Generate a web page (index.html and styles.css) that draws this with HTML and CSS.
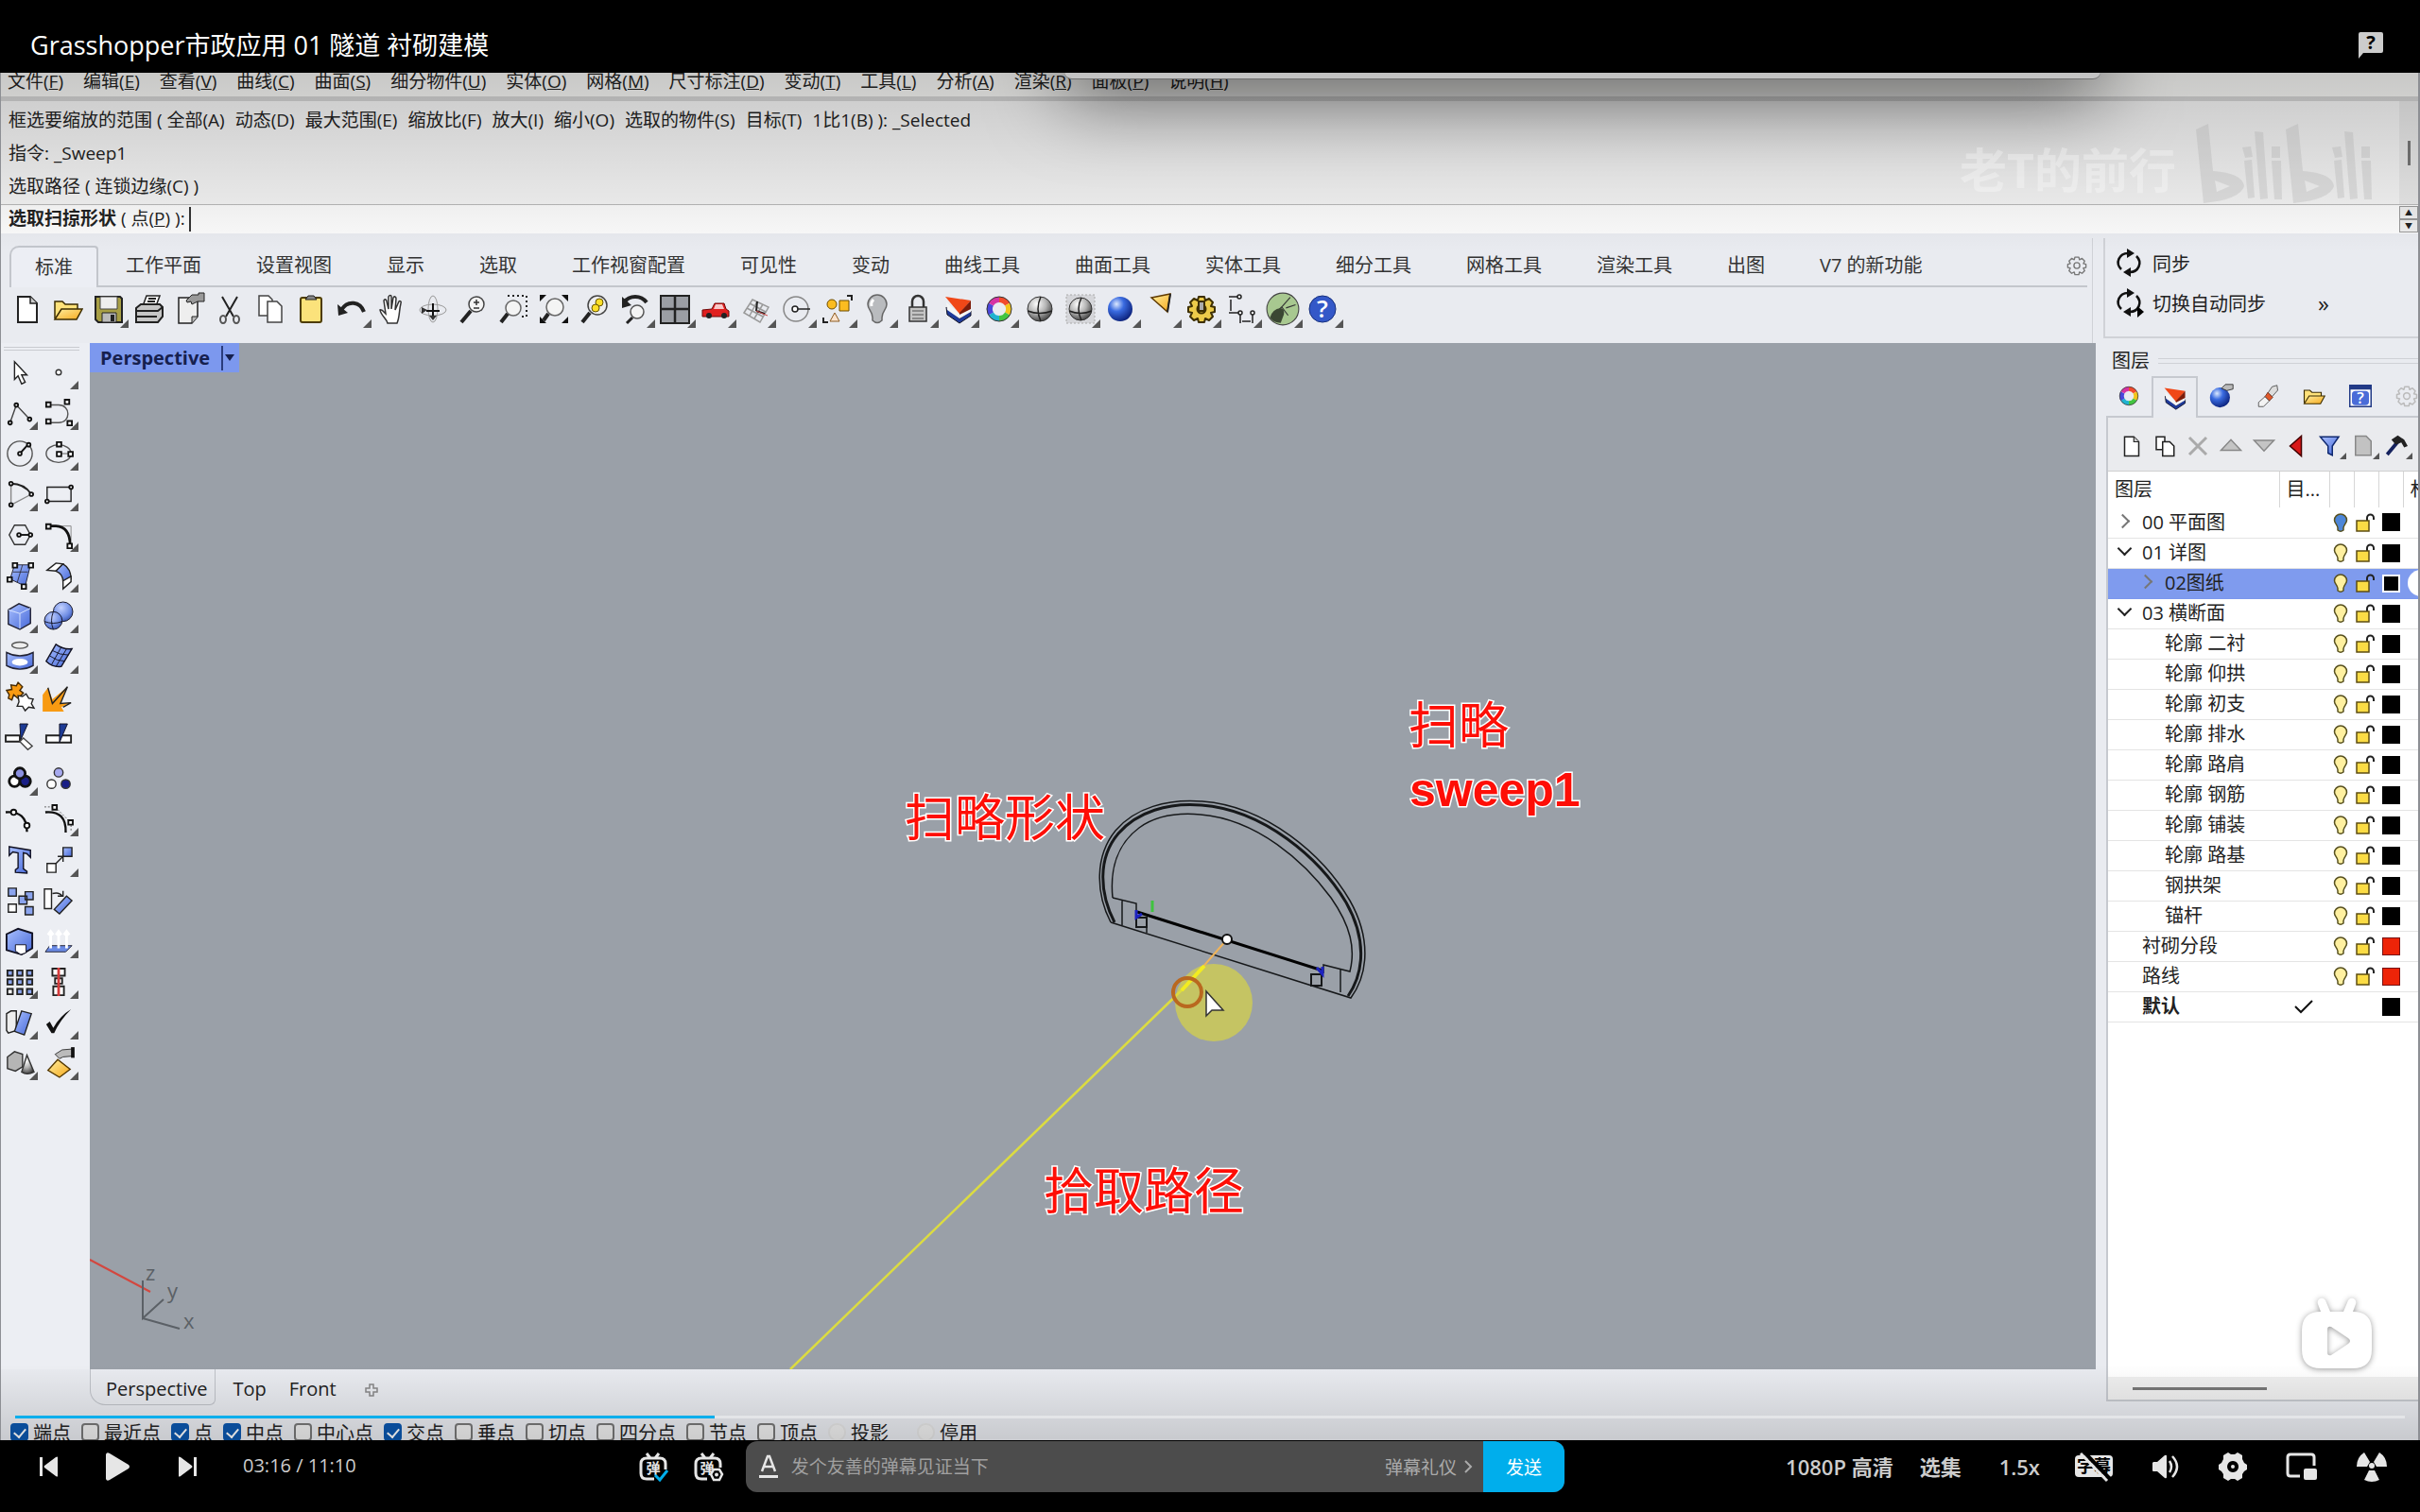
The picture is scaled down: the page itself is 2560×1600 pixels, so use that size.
FILE: index.html
```
<!DOCTYPE html>
<html lang="zh-CN">

<head>
  <meta charset="UTF-8">
  <meta name="viewport" content="width=device-width, initial-scale=1.0">
  <title>Grasshopper市政应用 01 隧道 衬砌建模</title>
  <link rel="stylesheet" href="styles.css">
</head>

<body>
  <!-- 共用圖形 -->
  <svg class="defs" aria-hidden="true">
    <defs>
      <linearGradient id="blue" x2="1" y2="1"><stop stop-color="#a9c0ff"/><stop offset="1" stop-color="#4668d8"/></linearGradient>
      <linearGradient id="gold" x2="1" y2="1"><stop stop-color="#fff0a0"/><stop offset="1" stop-color="#f5a81c"/></linearGradient>
      <radialGradient id="ball" cx=".38" cy=".3" r=".75"><stop stop-color="#fff"/><stop offset=".5" stop-color="#b4b4b4"/><stop offset="1" stop-color="#3c3c3c"/></radialGradient>
      <radialGradient id="blueball" cx=".35" cy=".3" r=".75"><stop stop-color="#dbe8ff"/><stop offset=".4" stop-color="#3a6be0"/><stop offset="1" stop-color="#0a1f78"/></radialGradient>
      <radialGradient id="paleball" cx=".4" cy=".3" r=".8"><stop stop-color="#c4d2ff"/><stop offset=".6" stop-color="#6f8de4"/><stop offset="1" stop-color="#2c469f"/></radialGradient>
    </defs>
    <symbol id="bulb" viewBox="0 0 18 22"><path d="M9 2a6.500 6.500 0 0 0-6.500 6.500c0 3 3 4.500 3.500 8V19q3 2.500 6 0v-2.500c.5-3.500 3.500-5 3.500-8A6.500 6.500 0 0 0 9 2z" stroke="#57501f" stroke-width="1.500"/></symbol>
    <symbol id="lock" viewBox="0 0 22 22"><path d="M13 9V6a3.500 3.500 0 0 1 7 0v2" fill="none" stroke="#222" stroke-width="2"/><rect x="2" y="9" width="13" height="11" fill="#fbdc45" stroke="#5d4d12" stroke-width="1.500"/></symbol>
    <symbol id="layers" viewBox="0 0 32 32"><path d="M3 14l14 12 12-8v5l-12 8L4 22z" fill="#1e3a9a" stroke="#112"/><path d="M3 9l14 12 12-6v4l-12 7L4 17z" fill="#f5f5f5"/><path d="M2 3l27 4-12 14z" fill="#f04818"/><path d="M29 7v9l-12 6v-2z" fill="#7c1c0a"/></symbol>
    <symbol id="wheel" viewBox="0 0 32 32"><g fill="none" stroke-width="6"><path d="M16 6a10 10 0 0 1 8.700 5" stroke="#f24b2c"/><path d="M24.700 11a10 10 0 0 1 0 10" stroke="#f3c51b"/><path d="M24.700 21A10 10 0 0 1 16 26" stroke="#43c541"/><path d="M16 26a10 10 0 0 1-8.700-5" stroke="#20b3d0"/><path d="M7.300 21a10 10 0 0 1 0-10" stroke="#4a46da"/><path d="M7.300 11A10 10 0 0 1 16 6" stroke="#d533a4"/></g><circle cx="16" cy="16" r="13" fill="none" stroke="#333"/></symbol>
    <symbol id="page" viewBox="0 0 32 32"><path d="M6 3h13l7 7v20H6z" fill="#fff" stroke="#222" stroke-width="2"/><path d="M19 3v7h7" fill="#ccc" stroke="#222" stroke-width="1.500"/></symbol>
    <symbol id="folder" viewBox="0 0 32 32"><path d="M2 26V8h8l3 3h13v5" fill="#ffe27a" stroke="#3b2c00" stroke-width="1.500"/><path d="M2 27l7-11h22l-6 11z" fill="url(#gold)" stroke="#3b2c00" stroke-width="1.500"/></symbol>
    <symbol id="sync" viewBox="0 0 32 32"><path d="M8 23C1 16 6 6 15 6M24 9c7 7 2 17-7 17" fill="none" stroke="#111" stroke-width="2.500"/><path d="M14 1l8 5-8 5zM18 21l-8 5 8 5z" fill="#111"/></symbol>
    <symbol id="cog" viewBox="0 0 32 32"><path d="M13 3h6l1 4 4-2 4 4-2 4 4 1v5l-4 1 2 4-4 4-4-2-1 4h-6l-1-4-4 2-4-4 2-4-4-1v-5l4-1-2-4 4-4 4 2z" stroke-linejoin="round"/><circle cx="16" cy="16" r="4.500" /></symbol>
  </svg>

  <header class="topbar">
    <h1>Grasshopper市政应用 01 隧道 衬砌建模</h1>
    <button class="feedback" aria-label="反馈"><svg width="28" height="30" viewBox="0 0 28 30"><path d="M3 1h22q2 0 2 2v18q0 2-2 2H6l-5 6V3q0-2 2-2z" fill="#ccc"/><text x="14" y="19" class="mark">?</text></svg></button>
  </header>

  <main class="video">
    <nav class="menubar">
      <button>文件(<u>F</u>)</button>
      <button>编辑(<u>E</u>)</button>
      <button>查看(<u>V</u>)</button>
      <button>曲线(<u>C</u>)</button>
      <button>曲面(<u>S</u>)</button>
      <button>细分物件(<u>U</u>)</button>
      <button>实体(<u>O</u>)</button>
      <button>网格(<u>M</u>)</button>
      <button>尺寸标注(<u>D</u>)</button>
      <button>变动(<u>T</u>)</button>
      <button>工具(<u>L</u>)</button>
      <button>分析(<u>A</u>)</button>
      <button>渲染(<u>R</u>)</button>
      <button>面板(<u>P</u>)</button>
      <button>说明(<u>H</u>)</button>
    </nav>

    <section class="history">
      <div class="log">
        <p class="options"><span>框选要缩放的范围 ( 全部(A)</span><span>动态(D)</span><span>最大范围(E)</span><span>缩放比(F)</span><span>放大(I)</span><span>缩小(O)</span><span>选取的物件(S)</span><span>目标(T)</span><span>1比1(B) ): _Selected</span></p>
        <p>指令: _Sweep1</p>
        <p>选取路径 ( 连锁边缘(C) )</p>
      </div>
      <div class="log-scroll"><i></i></div>
    </section>
    <div class="command">
      <label for="cmd"><b>选取扫掠形状</b> ( 点(<u>P</u>) ):</label>
      <input id="cmd" type="text">
      <div class="spin"><button aria-label="上一个">▲</button><button aria-label="下一个">▼</button></div>
    </div>

    <div class="workspace">
      <div class="main-col">
        <div class="toolbars">
          <div class="tabs">
            <button class="active">标准</button>
            <button>工作平面</button>
            <button>设置视图</button>
            <button>显示</button>
            <button>选取</button>
            <button>工作视窗配置</button>
            <button>可见性</button>
            <button>变动</button>
            <button>曲线工具</button>
            <button>曲面工具</button>
            <button>实体工具</button>
            <button>细分工具</button>
            <button>网格工具</button>
            <button>渲染工具</button>
            <button>出图</button>
            <button>V7 的新功能</button>
            <button class="tab-cog" aria-label="选项"><svg width="22" height="22" fill="none" stroke="#777" stroke-width="2"><use href="#cog"/></svg></button>
          </div>
          <div class="iconbar">
            <button class="tool" aria-label="新建"><svg viewBox="0 0 32 32"><use href="#page"/></svg></button>
            <button class="tool" aria-label="打开"><svg viewBox="0 0 32 32"><use href="#folder"/></svg></button>
            <button class="tool more" aria-label="保存"><svg viewBox="0 0 32 32"><path d="M2 3h26l2 2v25H5l-3-3z" fill="#a89f45" stroke="#222" stroke-width="2"/><path d="M7 3h18v13H7z" fill="#eee" stroke="#444"/><path d="M9 20h15v10H9z" fill="#bbb" stroke="#222"/><path d="M18 22h4v7h-4z" fill="#222"/></svg></button>
            <button class="tool" aria-label="打印"><svg viewBox="0 0 32 32"><path d="M9 13l4-11h14l-4 11" fill="#fff" stroke="#222" stroke-width="1.500"/><path d="M2 15l5-4h20l3 3v10l-5 6H2z" fill="#c6c6c6" stroke="#222" stroke-width="2"/><path d="M2 18h23l5-4M3 24h21M15 5h8M14 8h8" stroke="#222" stroke-width="2" fill="none"/></svg></button>
            <button class="tool" aria-label="文件属性"><svg viewBox="0 0 32 32"><path d="M4 4h20v20l-6 7H4z" fill="#eee" stroke="#222" stroke-width="1.500"/><path d="M18 31v-7h6" fill="#bbb" stroke="#222"/><path d="M12 7l6-6h7v-2h6v9h-7l-6 3-1-3-4 1z" fill="#999" stroke="#222"/></svg></button>
            <button class="tool" aria-label="剪切"><svg viewBox="0 0 32 32"><path d="M8 3l12 21M24 3L12 24" stroke="#222" stroke-width="2"/><ellipse cx="9" cy="27" rx="3" ry="4" fill="none" stroke="#555" stroke-width="2"/><ellipse cx="23" cy="27" rx="3" ry="4" fill="none" stroke="#555" stroke-width="2"/></svg></button>
            <button class="tool" aria-label="复制"><svg viewBox="0 0 32 32"><path d="M4 2h10l4 4v17H4z" fill="#fff" stroke="#444" stroke-width="1.500"/><path d="M13 8h10l5 5v17H13z" fill="#fff" stroke="#444" stroke-width="1.500"/></svg></button>
            <button class="tool" aria-label="粘贴"><svg viewBox="0 0 32 32"><rect x="5" y="4" width="22" height="26" rx="2" fill="#fbe27b" stroke="#4d3c00" stroke-width="2"/><path d="M10 6l3-4h6l3 4z" fill="#888" stroke="#222"/></svg></button>
            <button class="tool more" aria-label="撤销"><svg viewBox="0 0 32 32"><path d="M5 17C12 6 25 8 29 19" fill="none" stroke="#222" stroke-width="4"/><path d="M1 11l1 12 10-3z" fill="#222"/></svg></button>
            <button class="tool" aria-label="平移"><svg viewBox="0 0 32 32"><path d="M11 31c-1-5-7-8-8-14 2-1 4 2 6 4L7 7c1-2 3-1 3 1l2 8V3c1-2 3-2 3 0v13l2-12c1-2 3-1 3 1l-1 12 4-9c1-1 3 0 2 2-2 8-1 14-4 21z" fill="#fff" stroke="#333" stroke-width="1.500"/></svg></button>
            <button class="tool" aria-label="旋转视图"><svg viewBox="0 0 32 32"><ellipse cx="16" cy="17" rx="14" ry="6" fill="none" stroke="#999"/><ellipse cx="16" cy="16" rx="5" ry="14" fill="none" stroke="#999"/><path d="M16 10v14M9 18h14" stroke="#111" stroke-width="2"/><path d="M4 14l6 3-6 4zM16 28l-4-5h8z" fill="#333"/></svg></button>
            <button class="tool" aria-label="缩放"><svg viewBox="0 0 32 32"><circle cx="20" cy="11" r="8" fill="#f4f4f4" stroke="#444" stroke-width="1.500"/><path d="M14 18L4 30" stroke="#222" stroke-width="4"/><path d="M17 9h6M20 6v6M17 15h6" stroke="#333" stroke-width="1.500"/></svg></button>
            <button class="tool" aria-label="框选缩放"><svg viewBox="0 0 32 32"><path d="M10 2h20v22h-6" fill="none" stroke="#222" stroke-width="2" stroke-dasharray="2 3"/><circle cx="16" cy="15" r="8" fill="#f4f4f4" stroke="#666" stroke-width="1.500"/><path d="M10 21L3 30" stroke="#222" stroke-width="4"/></svg></button>
            <button class="tool" aria-label="缩放至最大范围"><svg viewBox="0 0 32 32"><circle cx="17" cy="14" r="9" fill="#f4f4f4" stroke="#666" stroke-width="1.500"/><path d="M10 21L5 28" stroke="#222" stroke-width="4"/><path d="M1 1h7L1 8zM31 1h-7l7 7zM1 31h7l-7-7zM31 31h-7l7-7z" fill="#111"/></svg></button>
            <button class="tool" aria-label="缩放选取物件"><svg viewBox="0 0 32 32"><circle cx="19" cy="12" r="10" fill="#eee" stroke="#444" stroke-width="1.500"/><path d="M11 20L3 30" stroke="#222" stroke-width="4"/><circle cx="21" cy="9" r="4" fill="#ffdf28" stroke="#665500"/><circle cx="17" cy="15" r="4" fill="#ffdf28" stroke="#665500"/></svg></button>
            <button class="tool more" aria-label="复原视图"><svg viewBox="0 0 32 32"><path d="M4 9C10 1 22 1 28 9" fill="none" stroke="#222" stroke-width="4"/><path d="M2 3v12l10-3z" fill="#222"/><circle cx="18" cy="19" r="7" fill="#f4f4f4" stroke="#555" stroke-width="1.500"/><path d="M13 25l-6 6" stroke="#222" stroke-width="3"/></svg></button>
            <button class="tool more" aria-label="四个视图"><svg viewBox="0 0 32 32"><path d="M1 2h30v29H1z" fill="#9b9ea4" stroke="#222" stroke-width="2"/><path d="M16 2v29M1 16h30" stroke="#222" stroke-width="2.500"/></svg></button>
            <button class="tool more" aria-label="设定视图"><svg viewBox="0 0 32 32"><path d="M2 17l10-1 3-6h10l2 6 3 2v6H2z" fill="#e02020" stroke="#6f0808"/><path d="M16 11h7l2 5H14z" fill="#f8c8c8"/><circle cx="9" cy="23" r="3" fill="#222"/><circle cx="25" cy="23" r="3" fill="#222"/></svg></button>
            <button class="tool more" aria-label="工作平面"><svg viewBox="0 0 32 32"><path d="M3 20L12 6l17 8-9 16zM6 15l17 9M9 10l17 9M9 23l8-15M14 26l9-15" fill="none" stroke="#999" stroke-width="1.500"/><path d="M16 18l1-10M16 18l9 3" stroke="#222" stroke-width="2"/><path d="M16 18l12 5" stroke="#c44"/></svg></button>
            <button class="tool more" aria-label="圆心"><svg viewBox="0 0 32 32"><circle cx="15" cy="16" r="13" fill="none" stroke="#888" stroke-width="1.500"/><path d="M14 16h16" stroke="#222" stroke-width="1.500"/><circle cx="14" cy="16" r="3" fill="#fff" stroke="#222" stroke-width="1.500"/></svg></button>
            <button class="tool more" aria-label="选取"><svg viewBox="0 0 32 32"><circle cx="10" cy="11" r="5" fill="#fbbc20" stroke="#6d4c00"/><path d="M18 7h10v11H18z" fill="#fbbc20" stroke="#6d4c00"/><path d="M13 20l5 9H8z" fill="#fbe2cc" stroke="#8d5c20"/><path d="M26 2h5v5M1 25v5h5" fill="none" stroke="#222" stroke-width="2"/></svg></button>
            <button class="tool more" aria-label="隐藏"><svg viewBox="0 0 32 32"><path d="M16 1a10 10 0 0 0-10 10c0 6 5 7 5 14v3q5 5 10 0v-3c0-7 5-8 5-14A10 10 0 0 0 16 1z" fill="#b9bbbe" stroke="#666" stroke-width="1.500"/><path d="M12 6q-3 3-2 7" fill="none" stroke="#fff" stroke-width="3"/></svg></button>
            <button class="tool more" aria-label="锁定"><svg viewBox="0 0 32 32"><path d="M10 15V8a6 6 0 0 1 12 0v7" fill="none" stroke="#333" stroke-width="2.500"/><path d="M7 14h18v15H7z" fill="#c4c4c4" stroke="#333" stroke-width="1.500"/><path d="M10 18h12M10 22h12M10 26h12" stroke="#777" stroke-width="1.500"/></svg></button>
            <button class="tool more" aria-label="图层"><svg viewBox="0 0 32 32"><use href="#layers"/></svg></button>
            <button class="tool more" aria-label="颜色"><svg viewBox="0 0 32 32"><use href="#wheel"/></svg></button>
            <button class="tool" aria-label="着色"><svg viewBox="0 0 32 32"><circle cx="16" cy="16" r="13" fill="url(#ball)" stroke="#333"/><path d="M3 18q13 5 26 0M17 3q-6 13 0 26" fill="none" stroke="#222" stroke-width="1.500"/></svg></button>
            <button class="tool more" aria-label="着色视图"><svg viewBox="0 0 32 32"><path d="M1 1h30v30H1z" fill="#d5d6da" stroke="#aaa" stroke-dasharray="2 2"/><circle cx="16" cy="16" r="12" fill="url(#ball)" stroke="#333"/><path d="M4 18q12 5 24 0M17 4q-6 12 0 24" fill="none" stroke="#222" stroke-width="1.500"/></svg></button>
            <button class="tool more" aria-label="渲染"><svg viewBox="0 0 32 32"><circle cx="16" cy="16" r="13" fill="url(#blueball)"/></svg></button>
            <button class="tool more" aria-label="聚光灯"><svg viewBox="0 0 32 32"><path d="M6 4l20-4-3 19z" fill="url(#gold)" stroke="#5f3a00" stroke-width="1.500"/><path d="M26 0l-3 19" stroke="#222" stroke-width="2"/></svg></button>
            <button class="tool more" aria-label="选项"><svg viewBox="0 0 32 32" fill="#eccb4a" stroke="#3d2f00" stroke-width="2"><use href="#cog"/><path d="M13 8h6v10h-6z" fill="#aaa"/></svg></button>
            <button class="tool more" aria-label="尺寸"><svg viewBox="0 0 32 32"><path d="M2 3h10M4 6v12M2 20h10M14 21v10M27 21v10M16 29h9" stroke="#222" stroke-width="1.500"/><g fill="#fff" stroke="#222" stroke-width="1.500"><circle cx="13" cy="3" r="2"/><circle cx="14" cy="20" r="2"/><circle cx="27" cy="20" r="2"/></g></svg></button>
            <button class="tool more big" aria-label="Grasshopper"><svg viewBox="0 0 32 32"><circle cx="16" cy="16" r="15" fill="#a8c890" stroke="#444"/><path d="M9 20l6-6 8-9M15 14l6 8M19 15l9-3" fill="none" stroke="#333"/><path d="M4 24q2-8 10-9 4 1 3 6l-3 8Q7 29 4 24z" fill="#3b4733"/></svg></button>
            <button class="tool more" aria-label="说明"><svg viewBox="0 0 32 32"><circle cx="16" cy="16" r="14" fill="#3458c8" stroke="#16307c"/><text x="16" y="25" class="help">?</text></svg></button>
          </div>
        </div>

        <div class="stage">
          <aside class="sidebar">
            <button class="tool" aria-label="取消选取"><svg viewBox="0 0 32 32"><path d="M10 4v20l4-4 4 9 4-2-4-8h6z" fill="#fff" stroke="#222" stroke-width="1.500"/></svg></button>
            <button class="tool more" aria-label="点"><svg viewBox="0 0 32 32"><circle cx="16" cy="16" r="3" fill="#fff" stroke="#333" stroke-width="1.500"/></svg></button>
            <button class="tool more" aria-label="多重直线"><svg viewBox="0 0 32 32"><path d="M5 27L12 7l15 16" fill="none" stroke="#444" stroke-width="1.500"/><g fill="#fff" stroke="#111" stroke-width="2"><circle cx="5" cy="27" r="2"/><circle cx="12" cy="7" r="2"/><circle cx="27" cy="23" r="2"/></g></svg></button>
            <button class="tool more" aria-label="曲线"><svg viewBox="0 0 32 32"><path d="M4 7h12c14 0 14 20 0 20H4" fill="none" stroke="#555" stroke-width="1.500"/><g fill="#fff" stroke="#111" stroke-width="2"><path d="M2 4h5v5H2zM23 1h5v5h-5zM2 23h5v5H2zM26 25h5v5h-5z"/></g></svg></button>
            <button class="tool more" aria-label="圆"><svg viewBox="0 0 32 32"><circle cx="16" cy="16" r="14" fill="none" stroke="#555" stroke-width="1.500"/><path d="M16 16l9-10" stroke="#111" stroke-width="2"/><circle cx="16" cy="16" r="2" fill="#fff" stroke="#111" stroke-width="2"/><circle cx="26" cy="6" r="2" fill="#fff" stroke="#111" stroke-width="2"/></svg></button>
            <button class="tool more" aria-label="椭圆"><svg viewBox="0 0 32 32"><ellipse cx="16" cy="16" rx="14" ry="10" fill="none" stroke="#555" stroke-width="1.500"/><path d="M16 16h12" stroke="#555"/><g fill="#fff" stroke="#111" stroke-width="2"><path d="M14 3h5v5h-5zM14 14h5v5h-5zM27 14h5v5h-5z"/></g></svg></button>
            <button class="tool more" aria-label="圆弧"><svg viewBox="0 0 32 32"><path d="M6 4v24l23-12" fill="none" stroke="#888" stroke-width="1.500"/><path d="M6 4q15 0 23 12" fill="none" stroke="#222" stroke-width="2"/><g fill="#fff" stroke="#111" stroke-width="2"><circle cx="6" cy="4" r="2"/><circle cx="6" cy="28" r="2"/><circle cx="29" cy="16" r="2"/></g></svg></button>
            <button class="tool more" aria-label="矩形"><svg viewBox="0 0 32 32"><path d="M3 8h27v16H3z" fill="none" stroke="#222" stroke-width="1.500"/><circle cx="30" cy="8" r="2" fill="#fff" stroke="#111" stroke-width="2"/><circle cx="3" cy="24" r="2" fill="#fff" stroke="#111" stroke-width="2"/></svg></button>
            <button class="tool more" aria-label="多边形"><svg viewBox="0 0 32 32"><path d="M10 5h12l6 11-6 11H10L4 16z" fill="none" stroke="#333" stroke-width="1.500"/><path d="M15 16h13" stroke="#111" stroke-width="2"/><circle cx="15" cy="16" r="2" fill="#fff" stroke="#111" stroke-width="2"/><circle cx="28" cy="16" r="2" fill="#fff" stroke="#111" stroke-width="2"/></svg></button>
            <button class="tool more" aria-label="曲线圆角"><svg viewBox="0 0 32 32"><path d="M16 6h14v16" fill="none" stroke="#888"/><path d="M5 6h8q16 1 16 22" fill="none" stroke="#111" stroke-width="3"/><g fill="#fff" stroke="#111" stroke-width="2"><path d="M2 4h5v5H2zM26 26h5v5h-5z"/></g></svg></button>
            <button class="tool more" aria-label="曲面"><svg viewBox="0 0 32 32"><path d="M10 4h18l-6 24L5 20z" fill="url(#blue)" stroke="#223"/><path d="M19 4l-6 20M8 12h17" stroke="#334"/><g fill="#fff" stroke="#111" stroke-width="2"><path d="M8 2h5v5H8zM26 2h5v5h-5zM2 18h5v5H2zM18 26h5v5h-5z"/></g></svg></button>
            <button class="tool more" aria-label="曲面圆角"><svg viewBox="0 0 32 32"><path d="M3 10L13 2l8 1-8 8z" fill="#fff" stroke="#222" stroke-width="1.500"/><path d="M21 3q9 5 9 17l-9 3q0-9-8-12z" fill="url(#blue)" stroke="#222" stroke-width="1.500"/><path d="M21 22v9l9-8v-6z" fill="#fff" stroke="#222" stroke-width="1.500"/></svg></button>
            <button class="tool more" aria-label="立方体"><svg viewBox="0 0 32 32"><path d="M3 9l12-7 13 5v17l-12 7L3 25z" fill="url(#blue)" stroke="#223" stroke-width="1.500"/><path d="M3 9l13 4 12-6M16 13v17" fill="none" stroke="#d9e4ff"/></svg></button>
            <button class="tool more" aria-label="布尔运算"><svg viewBox="0 0 32 32"><circle cx="21" cy="11" r="11" fill="url(#paleball)" stroke="#112"/><circle cx="10" cy="21" r="10" fill="url(#paleball)" stroke="#112"/><path d="M0 22q10 4 20 0M10 11q-4 10 0 20" fill="none" stroke="#112"/></svg></button>
            <button class="tool more" aria-label="投影"><svg viewBox="0 0 32 32"><ellipse cx="16" cy="3" rx="9" ry="3.500" fill="#eee" stroke="#555" stroke-width="1.500"/><path d="M1 11q15 8 30 0v15q-15 8-30 0z" fill="url(#blue)" stroke="#223" stroke-width="1.500"/><ellipse cx="16" cy="22" rx="9" ry="4" fill="#fff"/></svg></button>
            <button class="tool more" aria-label="网格"><svg viewBox="0 0 32 32"><path d="M13 2q8 6 18 5l-12 20q-10 1-17-6z" fill="url(#blue)" stroke="#112" stroke-width="1.500"/><path d="M9 9q8 5 18 5M6 15q8 6 17 6M19 5L8 25M25 7L13 27" fill="none" stroke="#112"/></svg></button>
            <button class="tool" aria-label="组合"><svg viewBox="0 0 32 32"><path d="M1 8l6-1-1-5 6 1 2-4 5 5-3 4 4 3-6 6-5-4-2 6-4-2 1-4z" fill="#f89a12" stroke="#432800" stroke-width="1.500"/><path d="M14 14l5 1 4-3 3 5 5 1-2 5 3 5-6-1-4 4-3-5-6 0 2-5z" fill="#fff" stroke="#222" stroke-width="1.500"/></svg></button>
            <button class="tool" aria-label="炸开"><svg viewBox="0 0 32 32"><path d="M-2 13l6-8 5 13L26 4l-8 19 11-1-10 5 3 5H-2z" fill="#f89a12"/><path d="M4 5l5 18L26 4l-8 19 12-1-9 5" fill="none" stroke="#222" stroke-width="1.500"/></svg></button>
            <button class="tool" aria-label="修剪"><svg viewBox="0 0 32 32"><path d="M16 0h9l-8 18z" fill="#1c3a94" stroke="#112"/><path d="M0 13h16v7H0z" fill="#fff" stroke="#222" stroke-width="2"/><path d="M20 16l10 9-5 4-9-9z" fill="#fff" stroke="#444" stroke-width="1.500"/></svg></button>
            <button class="tool" aria-label="分割"><svg viewBox="0 0 32 32"><path d="M2 13h28v8H2z" fill="#fff" stroke="#222" stroke-width="2"/><path d="M17 0h9l-9 21z" fill="#1c3a94" stroke="#112"/></svg></button>
            <button class="tool more" aria-label="群组"><svg viewBox="0 0 32 32" stroke="#111" stroke-width="3"><circle cx="10" cy="19" r="6" fill="#fff"/><circle cx="22" cy="19" r="6" fill="#1a1f86"/><circle cx="16" cy="10" r="6" fill="#8b90e0"/></svg></button>
            <button class="tool" aria-label="解散群组"><svg viewBox="0 0 32 32" stroke="#333" stroke-width="1.500"><circle cx="8" cy="22" r="5" fill="#fff"/><circle cx="24" cy="22" r="5" fill="#1a1f86"/><circle cx="16" cy="9" r="5" fill="#a6a9ee"/></svg></button>
            <button class="tool" aria-label="编辑点"><svg viewBox="0 0 32 32"><path d="M0 8q24-2 24 22" fill="none" stroke="#111" stroke-width="2.500"/><circle cx="9" cy="8" r="3" fill="#fff" stroke="#111" stroke-width="2"/><circle cx="24" cy="23" r="3" fill="#fff" stroke="#111" stroke-width="2"/></svg></button>
            <button class="tool more" aria-label="控制点"><svg viewBox="0 0 32 32"><path d="M0 2h12l18 18v9" fill="none" stroke="#555" stroke-dasharray="2 2"/><path d="M1 8q24-2 23 23" fill="none" stroke="#111" stroke-width="2.500"/><g fill="#fff" stroke="#111" stroke-width="2"><path d="M9 0h5v5H9zM27 17h5v5h-5z"/></g></svg></button>
            <button class="tool" aria-label="文字"><svg viewBox="0 0 32 32"><path d="M4 1l24 4v8l-4-4-4-1v18l4 3v2l-13-1v-3l3-2V8L8 7l-4 4z" fill="url(#blue)" stroke="#112" stroke-width="1.500"/></svg></button>
            <button class="tool more" aria-label="移动"><svg viewBox="0 0 32 32"><path d="M3 20h10v10H3z" fill="#fff" stroke="#222" stroke-width="1.500"/><path d="M21 2h10v10H21z" fill="url(#blue)" stroke="#222" stroke-width="1.500"/><path d="M13 20l8-8M15 12h6v6" fill="none" stroke="#222" stroke-width="1.500"/></svg></button>
            <button class="tool" aria-label="复制物件"><svg viewBox="0 0 32 32" stroke="#222" stroke-width="1.500"><path d="M3 2h9v9H3zM22 6h9v9h-9zM15 11h9v9h-9zM22 23h9v9h-9z" fill="#8ba4ee"/><path d="M3 20h9v9H3z" fill="#fff"/></svg></button>
            <button class="tool" aria-label="旋转"><svg viewBox="0 0 32 32" stroke="#222" stroke-width="1.500"><path d="M0 3h8v22H0z" fill="#fff"/><path d="M9 8q8-2 11 3M15 11h6V5" fill="none"/><path d="M25 11l6 5-14 15-6-5z" fill="url(#blue)"/></svg></button>
            <button class="tool more" aria-label="实体编辑"><svg viewBox="0 0 32 32"><path d="M1 8l13-6 16 5v17l-12 7L1 26z" fill="url(#blue)" stroke="#112" stroke-width="2"/><path d="M11 20h12v9l-6 2-6-4z" fill="#fff" stroke="#112"/></svg></button>
            <button class="tool more" aria-label="拉伸"><svg viewBox="0 0 32 32"><path d="M6 21h25l-7 7H1z" fill="#6a8ae4" stroke="#223"/><path d="M7 24V7M16 24V7M25 24V7M4 9l3-4 3 4M13 9l3-4 3 4M22 9l3-4 3 4" stroke="#fff" stroke-width="3" fill="none"/></svg></button>
            <button class="tool more" aria-label="阵列"><svg viewBox="0 0 32 32" stroke="#222" stroke-width="2"><path d="M2 3h6v6H2zM13 3h6v6h-6zM24 3h6v6h-6zM2 13h6v6H2zM13 13h6v6h-6zM24 13h6v6h-6zM13 24h6v6h-6zM24 24h6v6h-6z" fill="#8ba4ee"/><path d="M2 24h6v6H2z" fill="#fff"/></svg></button>
            <button class="tool more" aria-label="对齐"><svg viewBox="0 0 32 32"><path d="M9 1h14v8H9zM12 12h8v6h-8zM10 21h12v10H10z" fill="#fff" stroke="#222" stroke-width="2"/><path d="M16 0v32" stroke="#d43c3c" stroke-width="3"/></svg></button>
            <button class="tool more" aria-label="变形"><svg viewBox="0 0 32 32"><path d="M1 6l5-3h6v22l-9 3-2-3z" fill="#eee" stroke="#222" stroke-width="1.500"/><path d="M18 3l11 3-8 24-11-4z" fill="url(#blue)" stroke="#222" stroke-width="1.500"/></svg></button>
            <button class="tool more" aria-label="检查"><svg viewBox="0 0 32 32"><path d="M2 18l4-3 4 7Q18 8 30 1 17 14 11 28H8z" fill="#111"/></svg></button>
            <button class="tool more" aria-label="实体"><svg viewBox="0 0 32 32"><path d="M2 9l8-6 9 3v14l-8 5-9-3z" fill="#b5b5b5" stroke="#333" stroke-width="1.500"/><path d="M24 7l8 19q-8 4-14 0z" fill="url(#ball)" stroke="#333" stroke-width="1.500"/></svg></button>
            <button class="tool more" aria-label="曲面分析"><svg viewBox="0 0 32 32"><path d="M15 12l-11 12 13 8 12-9z" fill="url(#gold)" stroke="#543800" stroke-width="1.500"/><path d="M12 6l8-5 12-1v8l-11 1-4 2z" fill="#bbb" stroke="#333"/><path d="M32-2v12" stroke="#111" stroke-width="4"/></svg></button>
          </aside>

          <section class="viewport">
            <svg class="scene" viewBox="95 363 2122 1086" preserveAspectRatio="none">
              <!-- 隧道斷面 -->
              <g fill="none" stroke="#16181a" stroke-width="1.500">
                <path d="M1175 976C1159 945 1158 906 1180 879 1200 855 1235 845 1272 848 1340 853 1400 905 1428 953 1450 992 1448 1030 1429 1056L1175 976"/>
                <path d="M1179 976C1163 945 1161 908 1183 882 1203 859 1236 849 1271 852 1337 857 1396 908 1424 955 1445 992 1444 1028 1426 1054" stroke-width="3"/>
                <path d="M1177 950C1174 920 1182 893 1205 876 1223 863 1248 860 1270 862 1330 867 1380 912 1408 950 1429 980 1434 1004 1428 1028L1400 1021V1030"/>
                <path d="M1177 950L1202 956V968M1187 953V979M1213 970V987M1418 1026V1050M1398 1030V1043"/>
                <path d="M1202 971h11v10h-11zM1387 1031h11v12h-11z" stroke-width="2"/>
                <path d="M1203 965L1399 1027" stroke="#000" stroke-width="3"/>
              </g>
              <path d="M1202 963v8l6-4M1393 1024l6 7v-8" fill="none" stroke="#1c22c0" stroke-width="3"/>
              <path d="M1219 953v12" stroke="#3fc43f" stroke-width="3"/>
              <circle cx="1284" cy="1061" r="41" fill="#c5c463"/>
              <path d="M1256 1042L836 1449" stroke="#dcdc40" stroke-width="2.500"/>
              <path d="M1298 994L1256 1042" stroke="#f0b45a" stroke-width="2"/>
              <path d="M1274 1022L1250 1048" stroke="#f2ec20" stroke-width="4"/>
              <circle cx="1256" cy="1050" r="15" fill="none" stroke="#b9681f" stroke-width="4"/>
              <circle cx="1298" cy="994" r="5" fill="#fff" stroke="#111" stroke-width="2"/>
              <path d="M1276 1049v26l6-6h12z" fill="#fff" stroke="#333" stroke-width="1.500"/>
              <!-- 座標軸 -->
              <path d="M95 1333L159 1367" stroke="#d3473f" stroke-width="2"/>
              <path d="M151 1355v40l22-20M151 1395l39 11" fill="none" stroke="#5b6066" stroke-width="2"/>
              <g class="axis"><text x="154" y="1355">z</text><text x="177" y="1374">y</text><text x="194" y="1406">x</text></g>
              <g class="note"><text x="957" y="885">扫略形状</text><text x="1490" y="787">扫略</text><text x="1491" y="853" class="en">sweep1</text><text x="1104" y="1280">拾取路径</text></g>
            </svg>
            <button class="view-title">Perspective<i></i></button>
          </section>
        </div>

        <div class="view-tabs">
          <button class="active">Perspective</button>
          <button>Top</button>
          <button>Front</button>
          <button aria-label="新增"><svg width="14" height="14" viewBox="0 0 14 14"><path d="M5 1h4v4h4v4H9v4H5V9H1V5h4z" fill="none" stroke="#888" stroke-width="1.500"/></svg></button>
        </div>
        <div class="osnap">
          <label><input type="checkbox" checked>端点</label>
          <label><input type="checkbox">最近点</label>
          <label><input type="checkbox" checked>点</label>
          <label><input type="checkbox" checked>中点</label>
          <label><input type="checkbox">中心点</label>
          <label><input type="checkbox" checked>交点</label>
          <label><input type="checkbox">垂点</label>
          <label><input type="checkbox">切点</label>
          <label><input type="checkbox">四分点</label>
          <label><input type="checkbox">节点</label>
          <label><input type="checkbox">顶点</label>
          <label class="soft"><input type="checkbox">投影</label>
          <label class="soft"><input type="checkbox">停用</label>
        </div>
      </div>

      <aside class="panel">
        <div class="sync">
          <button><svg width="32" height="32"><use href="#sync"/></svg>同步</button>
          <div class="sync-row">
            <button><svg width="32" height="32"><use href="#sync"/><path d="M25 20l7 6-7 6z"/></svg>切换自动同步</button>
            <button class="chev">»</button>
          </div>
        </div>
        <h2>图层</h2>
        <div class="panel-tabs">
          <button aria-label="属性"><svg width="24" height="24"><use href="#wheel"/></svg></button>
          <button class="active" aria-label="图层"><svg width="26" height="26"><use href="#layers"/></svg></button>
          <button aria-label="渲染"><svg width="26" height="26" viewBox="0 0 32 32"><circle cx="14" cy="18" r="13" fill="url(#blueball)"/><path d="M16 6l5-5h10v6l-8 2z" fill="#bbb" stroke="#222"/></svg></button>
          <button aria-label="材质"><svg width="24" height="24" viewBox="0 0 32 32"><path d="M22 3l7-2 1 7-8 9-6-5z" fill="#ddd" stroke="#333"/><path d="M16 11l7 7-5 5-6-6z" fill="#e0582a" stroke="#521"/><path d="M12 17l6 6-8 8H3v-6z" fill="#f3f3f3" stroke="#333"/></svg></button>
          <button aria-label="图库"><svg width="24" height="24"><use href="#folder"/></svg></button>
          <button aria-label="说明"><svg width="24" height="24" viewBox="0 0 32 32"><path d="M1 1h30v30H1z" fill="#fff" stroke="#223a86" stroke-width="2"/><path d="M1 1h30v6H1z" fill="#223a86"/><rect x="4" y="9" width="24" height="20" rx="5" fill="#4a6cd8"/><text x="16" y="27" class="help small">?</text></svg></button>
          <button aria-label="选项"><svg width="24" height="24" fill="none" stroke="#bbb" stroke-width="2"><use href="#cog"/></svg></button>
        </div>
        <div class="panel-body">
          <div class="panel-tools">
            <button aria-label="新图层"><svg width="24" height="24"><use href="#page"/></svg></button>
            <button aria-label="新子图层"><svg width="24" height="24" viewBox="0 0 32 32" fill="#fff" stroke="#222" stroke-width="2"><path d="M4 3h12v18H4z"/><path d="M13 10h10l6 6v14H13z"/></svg></button>
            <button aria-label="删除"><svg width="24" height="24" viewBox="0 0 32 32"><path d="M4 4l24 24M28 4L4 28" stroke="#aaa" stroke-width="4"/></svg></button>
            <button aria-label="上移"><svg width="24" height="24" viewBox="0 0 32 32"><path d="M2 22L16 7l14 15z" fill="#c4c4c4" stroke="#888" stroke-width="2"/></svg></button>
            <button aria-label="下移"><svg width="24" height="24" viewBox="0 0 32 32"><path d="M2 8l14 15L30 8z" fill="#c4c4c4" stroke="#888" stroke-width="2"/></svg></button>
            <button aria-label="上一层"><svg width="24" height="24" viewBox="0 0 32 32"><path d="M22 2v28L6 16z" fill="#d81818" stroke="#400" stroke-width="2"/></svg></button>
            <button class="more" aria-label="过滤"><svg width="24" height="24" viewBox="0 0 32 32"><path d="M2 3h26L19 16v13l-6-3V16z" fill="url(#blue)" stroke="#112a70" stroke-width="2"/></svg></button>
            <button class="more" aria-label="列表"><svg width="24" height="24" viewBox="0 0 32 32"><path d="M5 2h15l7 7v20H5z" fill="#c2c2c2" stroke="#888" stroke-width="2"/></svg></button>
            <button class="more" aria-label="工具"><svg width="24" height="24" viewBox="0 0 32 32"><path d="M3 28L18 10" stroke="#15225e" stroke-width="5"/><path d="M9 7l9-6 9 6 5 9-5 2-4-7-8 3z" fill="#222"/></svg></button>
            <button aria-label="说明"><svg width="24" height="24"><circle cx="12" cy="12" r="12" fill="#3458c8"/></svg></button>
          </div>
          <table class="layers">
            <colgroup><col class="c-name"><col class="c-cur"><col class="c-ico"><col class="c-ico"><col class="c-ico"><col></colgroup>
            <thead>
              <tr><th>图层</th><th>目...</th><th></th><th></th><th></th><th>材</th></tr>
            </thead>
            <tbody>
              <tr><td class="shut">00 平面图</td><td></td><td><svg class="bulb off"><use href="#bulb"/></svg></td><td><svg class="lock"><use href="#lock"/></svg></td><td><i class="swatch"></i></td><td></td></tr>
              <tr><td class="open">01 详图</td><td></td><td><svg class="bulb"><use href="#bulb"/></svg></td><td><svg class="lock"><use href="#lock"/></svg></td><td><i class="swatch"></i></td><td></td></tr>
              <tr class="selected"><td class="shut sub">02图纸</td><td></td><td><svg class="bulb"><use href="#bulb"/></svg></td><td><svg class="lock"><use href="#lock"/></svg></td><td><i class="swatch"></i></td><td><i class="dot"></i></td></tr>
              <tr><td class="open">03 横断面</td><td></td><td><svg class="bulb"><use href="#bulb"/></svg></td><td><svg class="lock"><use href="#lock"/></svg></td><td><i class="swatch"></i></td><td></td></tr>
              <tr><td class="sub">轮廓 二衬</td><td></td><td><svg class="bulb"><use href="#bulb"/></svg></td><td><svg class="lock"><use href="#lock"/></svg></td><td><i class="swatch"></i></td><td></td></tr>
              <tr><td class="sub">轮廓 仰拱</td><td></td><td><svg class="bulb"><use href="#bulb"/></svg></td><td><svg class="lock"><use href="#lock"/></svg></td><td><i class="swatch"></i></td><td></td></tr>
              <tr><td class="sub">轮廓 初支</td><td></td><td><svg class="bulb"><use href="#bulb"/></svg></td><td><svg class="lock"><use href="#lock"/></svg></td><td><i class="swatch"></i></td><td></td></tr>
              <tr><td class="sub">轮廓 排水</td><td></td><td><svg class="bulb"><use href="#bulb"/></svg></td><td><svg class="lock"><use href="#lock"/></svg></td><td><i class="swatch"></i></td><td></td></tr>
              <tr><td class="sub">轮廓 路肩</td><td></td><td><svg class="bulb"><use href="#bulb"/></svg></td><td><svg class="lock"><use href="#lock"/></svg></td><td><i class="swatch"></i></td><td></td></tr>
              <tr><td class="sub">轮廓 钢筋</td><td></td><td><svg class="bulb"><use href="#bulb"/></svg></td><td><svg class="lock"><use href="#lock"/></svg></td><td><i class="swatch"></i></td><td></td></tr>
              <tr><td class="sub">轮廓 铺装</td><td></td><td><svg class="bulb"><use href="#bulb"/></svg></td><td><svg class="lock"><use href="#lock"/></svg></td><td><i class="swatch"></i></td><td></td></tr>
              <tr><td class="sub">轮廓 路基</td><td></td><td><svg class="bulb"><use href="#bulb"/></svg></td><td><svg class="lock"><use href="#lock"/></svg></td><td><i class="swatch"></i></td><td></td></tr>
              <tr><td class="sub">钢拱架</td><td></td><td><svg class="bulb"><use href="#bulb"/></svg></td><td><svg class="lock"><use href="#lock"/></svg></td><td><i class="swatch"></i></td><td></td></tr>
              <tr><td class="sub">锚杆</td><td></td><td><svg class="bulb"><use href="#bulb"/></svg></td><td><svg class="lock"><use href="#lock"/></svg></td><td><i class="swatch"></i></td><td></td></tr>
              <tr><td>衬砌分段</td><td></td><td><svg class="bulb"><use href="#bulb"/></svg></td><td><svg class="lock"><use href="#lock"/></svg></td><td><i class="swatch red"></i></td><td></td></tr>
              <tr><td>路线</td><td></td><td><svg class="bulb"><use href="#bulb"/></svg></td><td><svg class="lock"><use href="#lock"/></svg></td><td><i class="swatch red"></i></td><td></td></tr>
              <tr><td><b>默认</b></td><td class="current"><svg width="20" height="16" viewBox="0 0 20 16"><path d="M1 8l6 6L19 2" fill="none" stroke="#111" stroke-width="2"/></svg></td><td></td><td></td><td><i class="swatch"></i></td><td></td></tr>
            </tbody>
          </table>
          <div class="hscroll"><i></i></div>
        </div>
      </aside>
    </div>

    <div class="popup"></div>
    <div class="shade"></div>
    <div class="watermark">
      <span>老T的前行</span>
      <svg width="190" height="84" viewBox="0 0 190 84"><g id="bili"><path d="M1 6L14 0l5 50Q50 52 52 66 48 80 9 84zM21 60l2 12 14-6z" fill-rule="evenodd"/><path d="M50 25l9-1 2 11-8 1zM52 39l8-1 3 40-7 1zM63 8l9 1 5 70-8 1zM81 24h9v12h-9zM81 39h10l1 41h-8z"/></g><use href="#bili" x="95"/></svg>
    </div>
    <button class="badge" aria-label="播放"><svg width="82" height="80" viewBox="0 0 82 80"><path fill-rule="evenodd" d="M22 4q4-3 7 1l5 12h14l5-12q3-4 7-1 2 2 1 5l-3 8q20 0 20 20v20q0 20-20 20H24Q4 77 4 57V37q0-20 20-20l-3-8q-1-3 1-5zM31 36v24q0 4 4 3l18-12q4-3 0-6L35 33q-4-1-4 3z" fill="#fff"/></svg></button>
    <progress class="seek" max="670" value="196"></progress>
  </main>

  <footer class="player">
    <button class="p-btn" aria-label="上一个"><svg width="26" height="26" viewBox="0 0 26 26"><path d="M3 3h3v20H3zM22 3v20q0 1-2 0L8 14q-1-1 0-2l12-9q2-1 2 0z"/></svg></button>
    <button class="p-btn play" aria-label="播放"><svg width="32" height="32" viewBox="0 0 32 32"><path d="M4 3v26q1 3 4 1l20-12q2-2 0-4L8 2Q5 0 4 3z"/></svg></button>
    <button class="p-btn" aria-label="下一个"><svg width="26" height="26" viewBox="0 0 26 26"><path d="M20 3h3v20h-3zM4 3v20q0 1 2 0l12-9q1-1 0-2L6 3Q4 2 4 3z"/></svg></button>
    <span class="time">03:16 / 11:10</span>

    <div class="danmu">
      <button class="p-btn" aria-label="弹幕开关"><svg width="32" height="32" viewBox="0 0 32 32"><path d="M9 2l4 5M22 2l-4 5M17 29H9q-6 0-6-6V13q0-6 6-6h14q6 0 6 6v6" fill="none" stroke="#e6e6e6" stroke-width="3"/><text x="16" y="23" class="dm">弹</text><path d="M18 25l5 5 8-10" fill="none" stroke="#00aeec" stroke-width="3"/></svg></button>
      <button class="p-btn" aria-label="弹幕设置"><svg width="32" height="32" viewBox="0 0 32 32"><path d="M9 2l4 5M22 2l-4 5M15 29H9q-6 0-6-6V13q0-6 6-6h14q6 0 6 6v4" fill="none" stroke="#e6e6e6" stroke-width="3"/><text x="15" y="23" class="dm">弹</text><path d="M22 19h6l3 5-3 6h-6l-3-6z" fill="#000" stroke="#e6e6e6" stroke-width="2.500"/><circle cx="25" cy="24.500" r="2"/></svg></button>
      <form class="send">
        <svg width="24" height="26" viewBox="0 0 24 26"><path d="M5 18l6-16h2l6 16M7 13h10" fill="none" stroke="#e6e6e6" stroke-width="2.500"/><path d="M2 22h20v3H2z" fill="#e6e6e6"/></svg>
        <input type="text" placeholder="发个友善的弹幕见证当下" aria-label="弹幕">
        <a href="#">弹幕礼仪<svg width="12" height="16" viewBox="0 0 12 16"><path d="M3 2l6 6-6 6" fill="none" stroke="#aaa" stroke-width="2"/></svg></a>
        <button type="button">发送</button>
      </form>
    </div>

    <div class="settings">
      <button>1080P 高清</button>
      <button>选集</button>
      <button>1.5x</button>
      <button class="p-btn" aria-label="字幕"><svg width="42" height="32" viewBox="0 0 42 32"><rect x="1" y="4" width="40" height="23" rx="4"/><text x="21" y="22" class="cc">字幕</text><path d="M11 1l27 28" stroke="#000" stroke-width="4"/><path d="M7 2l28 29" stroke="#e6e6e6" stroke-width="3"/></svg></button>
      <button class="p-btn" aria-label="音量"><svg width="30" height="30" viewBox="0 0 30 30"><path d="M2 10h4l8-7q2-1 2 1v22q0 2-2 1l-8-7H2q-1 0-1-1v-8z"/><path d="M19 9q4 6 0 12M22 4q10 11 0 22" fill="none" stroke="#e6e6e6" stroke-width="2.500"/></svg></button>
      <button class="p-btn" aria-label="设置"><svg width="32" height="32" viewBox="0 0 32 32"><path fill-rule="evenodd" d="M11 1l3 2h4l3-2 5 3v4l2 4 3 2v5l-3 2-2 3v4l-5 3-3-2h-4l-3 2-5-3v-4l-2-3-3-2v-5l3-2 2-4V4zM16 10a6 6 0 1 0 .1 0z"/><circle cx="16" cy="16" r="2"/></svg></button>
      <button class="p-btn" aria-label="画中画"><svg width="34" height="32" viewBox="0 0 34 32"><path d="M15 26H5q-3 0-3-3V6q0-3 3-3h22q3 0 3 3v9" fill="none" stroke="#e6e6e6" stroke-width="3"/><rect x="19" y="18" width="14" height="12" rx="2"/></svg></button>
      <button class="p-btn" aria-label="退出全屏"><svg width="34" height="32" viewBox="0 0 34 32"><path d="M9 1l6 10-3 5H1Q1 6 9 1zM25 1l-6 10 3 5h11Q33 6 25 1zM14 20h6l5 10q-8 4-16 0z"/><circle cx="17" cy="15" r="3"/></svg></button>
    </div>
  </footer>
</body>

</html>
```
FILE: styles.css
```
* {
  box-sizing: border-box;
}

body {
  display: flex;
  flex-direction: column;
  height: 100vh;
  margin: 0;
  overflow: hidden;
  background: #000;
  color: #222;
  font-family: "Open Sans", "Noto Sans CJK SC", sans-serif;
  font-size: 20px;
}

button {
  padding: 0;
  border: 0;
  background: none;
  color: inherit;
  font: inherit;
  white-space: nowrap;
}

svg {
  display: block;
  overflow: visible;
}

p {
  margin: 0;
}

.defs {
  position: absolute;
  width: 0;
  height: 0;
}

/* 標題列 */
.topbar {
  display: flex;
  align-items: center;
  justify-content: space-between;
  height: 77px;
  padding: 18px 38px 0 32px;
  color: #fff;
}

.topbar h1 {
  margin: 0;
  font-size: 27px;
  font-weight: 400;
  line-height: 40px;
}

.mark {
  fill: #000;
  font-size: 20px;
  font-weight: 700;
  text-anchor: middle;
}

/* 影片畫面 */
.video {
  position: relative;
  display: flex;
  flex: 1;
  flex-direction: column;
  min-height: 0;
  overflow: hidden;
  border-right: 2px solid #8d8f94;
  border-left: 1px solid #8d8f94;
  background: #e9ebf0;
}

.menubar {
  display: flex;
  gap: 21px;
  height: 25px;
  padding-left: 7px;
  background: #f5f5f3;
  font-size: 19px;
  line-height: 18px;
}

.menubar button {
  height: 18px;
}

.history {
  display: flex;
  height: 115px;
  border-top: 5px solid #d3d3d3;
  border-bottom: 1px solid #b9b9b9;
  background: #f4f4f4;
  font-size: 19px;
  line-height: 35px;
}

.log {
  flex: 1;
  padding: 3px 0 0 8px;
}

.options {
  display: flex;
  gap: 11px;
}

.log-scroll {
  display: flex;
  justify-content: center;
  align-items: center;
  width: 20px;
  background: #e8e8e8;
}

.log-scroll i {
  width: 3px;
  height: 26px;
  background: #777;
}

.command {
  display: flex;
  align-items: center;
  height: 30px;
  margin-bottom: 5px;
  padding-left: 8px;
  background: #fbfbfb;
  font-size: 19px;
}

.command label {
  height: 30px;
  line-height: 28px;
}

.command input {
  flex: 1;
  height: 26px;
  margin-left: 4px;
  border: 0;
  border-left: 2px solid #333;
  background: none;
  font: inherit;
}

.spin {
  display: flex;
  flex-direction: column;
  width: 20px;
}

.spin button {
  height: 14px;
  border: 1px solid #999;
  background: #eee;
  font-size: 8px;
  line-height: 10px;
}

.workspace {
  display: flex;
  flex: 1;
  min-height: 0;
}

.main-col {
  display: flex;
  flex: 1;
  flex-direction: column;
  min-width: 0;
}

/* 工具列 */
.toolbars {
  margin-right: 3px;
  border-right: 1px solid #cfd1d6;
}

.tabs {
  display: flex;
  height: 52px;
  margin: 0 5px 0 9px;
  padding-top: 8px;
  border-bottom: 2px solid #c3c6cc;
  color: #333;
}

.tabs button {
  padding: 0 29px;
  line-height: 42px;
}

.tabs .active {
  height: 44px;
  padding: 0 25px;
  border: 2px solid #c3c6cc;
  border-bottom: 0;
  border-radius: 10px 4px 0 0;
  background: #eceef4;
  line-height: 40px;
}

.tabs .tab-cog {
  margin-left: auto;
  padding: 0;
}

.iconbar {
  display: flex;
  max-width: 1420px;
  height: 59px;
  padding-left: 7px;
}

.tool {
  position: relative;
  display: flex;
  flex: 1;
  align-items: center;
  justify-content: center;
  height: 46px;
}

.tool svg {
  width: 32px;
  height: 32px;
}

.tool.big svg {
  width: 36px;
  height: 36px;
}

.more {
  position: relative;
}

/* 右下角的展開記號 */
.more::after {
  content: "";
  position: absolute;
  right: 0;
  bottom: 3px;
  border-bottom: 9px solid #555;
  border-left: 9px solid transparent;
}

.help {
  fill: #fff;
  font-size: 26px;
  font-weight: 600;
  text-anchor: middle;
}

.small {
  font-size: 22px;
}

.stage {
  display: flex;
  flex: 1;
  min-height: 0;
}

.sidebar {
  display: grid;
  grid-template-columns: 39px 43px;
  grid-auto-rows: 43px;
  width: 94px;
  padding-top: 9px;
  background:
    linear-gradient(#c9cbd0 0 1px, transparent 1px 3px, #c9cbd0 3px 4px) 3px 4px / 80px 4px no-repeat,
    #eceef3;
}

.sidebar .tool {
  height: 43px;
}

.sidebar .tool svg {
  width: 30px;
  height: 30px;
}

.viewport {
  position: relative;
  flex: 1;
  overflow: hidden;
  background: #9aa0a8;
}

.scene {
  width: 100%;
  height: 100%;
}

.view-title {
  position: absolute;
  top: 0;
  left: 0;
  display: flex;
  align-items: center;
  gap: 12px;
  height: 31px;
  padding: 0 5px 0 11px;
  background: #7c98ee;
  color: #16204e;
  font-weight: 700;
}

.view-title i {
  display: flex;
  align-items: center;
  height: 26px;
  padding-left: 2px;
  border-left: 2px solid #2a3c7c;
}

.view-title i::after {
  content: "";
  border: 5px solid transparent;
  border-top: 7px solid #16204e;
  border-bottom: 0;
}

.axis {
  fill: #5b6066;
  font-size: 22px;
}

.note {
  fill: #fe0e06;
  stroke: #fff;
  stroke-width: 3px;
  paint-order: stroke;
  font-size: 53px;
}

.note .en {
  font-family: "Liberation Sans", sans-serif;
  font-size: 50px;
  font-weight: 700;
}

.view-tabs {
  display: flex;
  height: 55px;
  padding-left: 94px;
}

.view-tabs button {
  height: 38px;
  padding: 0 12px;
  line-height: 42px;
}

.view-tabs .active {
  padding: 0 8px 0 16px;
  margin-right: 6px;
  border: 1px solid #bfc2c8;
  border-top: 0;
  border-radius: 0 0 6px 16px;
}

.view-tabs svg {
  margin: 6px 0 0 6px;
}

.osnap {
  display: flex;
  gap: 11px;
  height: 20px;
  padding-left: 10px;
}

.osnap label {
  display: flex;
  align-items: center;
  gap: 5px;
  height: 22px;
}

.osnap input {
  appearance: none;
  display: grid;
  place-items: center;
  width: 19px;
  height: 19px;
  margin: 0;
  border: 2px solid #777;
  border-radius: 4px;
  background: #eee;
}

.osnap input:checked {
  border-color: #0b57ae;
  background: #0b57ae;
}

.osnap input:checked::after {
  content: "";
  width: 6px;
  height: 10px;
  border-right: 2px solid #fff;
  border-bottom: 2px solid #fff;
  transform: rotate(40deg);
}

.osnap .soft input {
  border-color: #e4e4e4;
  border-radius: 9px;
}

.osnap .soft {
  margin-right: 19px;
}

/* 右側面板 */
.panel {
  display: flex;
  flex-direction: column;
  width: 341px;
  overflow: hidden;
}

.sync {
  height: 106px;
  margin-left: 8px;
  padding: 5px 0 0 9px;
  border-bottom: 2px solid #d0d2d7;
  border-left: 2px solid #d0d2d7;
}

.sync button {
  display: flex;
  align-items: center;
  gap: 9px;
  height: 42px;
}

.sync svg {
  width: 32px;
}

.sync-row {
  display: flex;
  justify-content: space-between;
  padding-right: 94px;
}

.sync-row .chev {
  font-size: 24px;
}

.sync svg use {
  width: 28px;
  height: 28px;
}

.panel h2 {
  display: flex;
  align-items: center;
  gap: 9px;
  margin: 8px 0 0 17px;
  font-size: 20px;
  font-weight: 400;
  line-height: 32px;
}

.panel h2::after {
  content: "";
  flex: 1;
  height: 4px;
  border: solid #cfd1d6;
  border-width: 1px 0;
}

.panel-tabs {
  display: flex;
  height: 42px;
  margin-left: 10px;
}

.panel-tabs button {
  display: flex;
  flex: 0 0 49px;
  align-items: center;
  justify-content: center;
}

.panel-tabs .active {
  height: 44px;
  border: 2px solid #c6c9cf;
  border-bottom: 0;
  background: #e9ebf0;
  z-index: 1;
}

.panel-body {
  display: flex;
  flex: 1;
  flex-direction: column;
  margin: 0 0 41px 11px;
  border: 2px solid #c6c9cf;
  border-right: 0;
  background: #fff;
}

.panel-tools {
  display: flex;
  height: 57px;
  padding: 10px 0 0 7px;
  border-bottom: 1px solid #cfcfcf;
  background: #eaebee;
}

.panel-tools button {
  display: flex;
  flex: 0 0 35px;
  align-items: center;
  justify-content: center;
  height: 40px;
}

.panel-tools .more::after {
  bottom: 6px;
  border-bottom-width: 7px;
  border-left-width: 7px;
}

.layers {
  width: 100%;
  border-collapse: collapse;
  table-layout: fixed;
}

.c-name {
  width: 181px;
}

.c-cur {
  width: 53px;
}

.c-ico {
  width: 26px;
}

.layers th {
  height: 38px;
  padding: 0 0 0 7px;
  border-right: 1px solid #d6d6d6;
  overflow: hidden;
  font-weight: 400;
  line-height: 34px;
  text-align: left;
  white-space: nowrap;
}

.layers th:last-child {
  border: 0;
}

.layers td {
  height: 32px;
  padding: 0;
  border-bottom: 1px solid #e4e4e4;
  overflow: hidden;
  line-height: 30px;
  white-space: nowrap;
}

.layers td:first-child {
  padding-left: 36px;
}

.layers td.sub:first-child {
  padding-left: 60px;
}

.layers .open::before,
.layers .shut::before {
  content: "";
  float: left;
  width: 9px;
  height: 9px;
  margin: 5px 0 0 -24px;
  border: solid #222;
  border-width: 0 2px 2px 0;
  transform: rotate(45deg);
}

.layers .shut::before {
  border-color: #777;
  margin: 8px 0 0 -26px;
  transform: rotate(-45deg);
}

.layers .selected td {
  border-color: #7c98ee;
  background: #7f9bee;
}

.layers .current {
  padding-left: 16px;
}

.bulb {
  width: 18px;
  height: 22px;
  margin-left: 3px;
  fill: #fff0a0;
}

.bulb.off {
  fill: #4d86d8;
}

.lock {
  width: 22px;
  height: 22px;
  margin-left: 1px;
}

.swatch {
  display: block;
  width: 19px;
  height: 19px;
  margin-left: 4px;
  background: #000;
}

.swatch.red {
  border: 1px solid #711;
  background: #ee2408;
}

.selected .swatch {
  border: 2px solid #fff;
}

.dot {
  display: block;
  width: 28px;
  height: 28px;
  margin-left: 5px;
  border-radius: 14px;
  background: #fff;
}

.hscroll {
  height: 24px;
  margin-top: auto;
  padding: 11px 0 0 26px;
  background: #efefef;
}

.hscroll i {
  display: block;
  width: 142px;
  height: 3px;
  background: #777;
}

/* 覆蓋層 */
.popup {
  position: absolute;
  top: -80px;
  right: 336px;
  left: 44%;
  height: 87px;
  border-bottom: 1px solid #888;
  border-radius: 0 0 8px 8px;
  background: #eee;
  box-shadow: 0 20px 80px rgba(0, 0, 0, .5);
}

.shade {
  position: absolute;
  inset: 0;
  background:
    linear-gradient(rgba(0, 0, 0, .18), rgba(0, 0, 0, 0) 190px),
    linear-gradient(to top, rgba(0, 0, 0, .14), rgba(0, 0, 0, 0) 80px);
  pointer-events: none;
}

.watermark {
  position: absolute;
  top: 47px;
  right: 46px;
  display: flex;
  align-items: center;
  gap: 20px;
  color: rgba(255, 255, 255, .3);
  font-size: 50px;
  font-weight: 700;
  line-height: 84px;
}

.watermark span {
  padding-top: 14px;
}

.watermark svg {
  fill: rgba(150, 150, 150, .22);
}

.badge {
  position: absolute;
  right: 45px;
  bottom: 73px;
  filter: drop-shadow(0 1px 3px rgba(0, 0, 0, .4));
}

.seek {
  position: absolute;
  right: 14px;
  bottom: 23px;
  left: 15px;
  appearance: none;
  width: calc(100% - 29px);
  height: 3px;
  border: 0;
}

.seek::-webkit-progress-bar {
  background: rgba(255, 255, 255, .4);
}

.seek::-webkit-progress-value {
  background: #00aeec;
}

/* 播放控制列 */
.player {
  display: flex;
  align-items: flex-start;
  height: 76px;
  padding: 1px 34px 0 39px;
  color: #ccc;
}

.p-btn {
  display: flex;
  align-items: center;
  justify-content: center;
  width: 26px;
  height: 53px;
  fill: #e6e6e6;
}

.play {
  width: 32px;
  margin: 0 45px 0 43px;
}

.time {
  margin-left: 46px;
  line-height: 52px;
}

.danmu {
  display: flex;
  flex: 1;
  gap: 26px;
  margin: 0 234px 0 298px;
}

.danmu .p-btn {
  width: 32px;
}

.dm {
  fill: #e6e6e6;
  font-size: 15px;
  font-weight: 700;
  text-anchor: middle;
}

.send {
  display: flex;
  flex: 1;
  align-items: center;
  height: 54px;
  margin-left: -2px;
  padding-left: 12px;
  border-radius: 12px;
  overflow: hidden;
  background: #4c4c4c;
  font-size: 19px;
}

.send input {
  flex: 1;
  min-width: 0;
  margin-left: 10px;
  border: 0;
  background: none;
  color: #fff;
  font: inherit;
}

.send input::placeholder {
  color: #a0a0a0;
}

.send a {
  display: flex;
  align-items: center;
  gap: 6px;
  margin-right: 10px;
  color: #aaa;
  text-decoration: none;
}

.send button {
  width: 86px;
  height: 54px;
  background: #00aeec;
  color: #fff;
}

.settings {
  display: flex;
  align-items: center;
  gap: 40px;
  height: 53px;
}

.settings > button:not(.p-btn) {
  margin-right: -4px;
  font-size: 22px;
  font-weight: 600;
  line-height: 48px;
}

.settings > button:not(.p-btn):first-child {
  margin-right: -12px;
}

.settings > button:not(.p-btn):nth-child(2) {
  margin-right: 0;
}

.settings .p-btn {
  width: auto;
}

.cc {
  fill: #000;
  font-size: 18px;
  font-weight: 700;
  text-anchor: middle;
}
```
